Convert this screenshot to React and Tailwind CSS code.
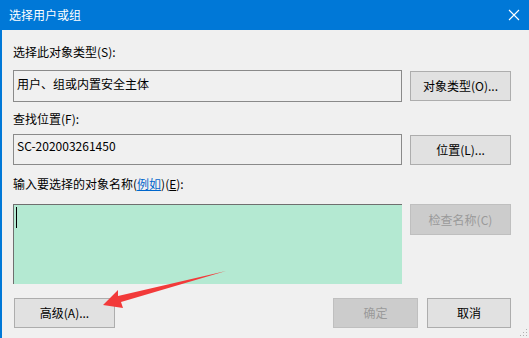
import React from "react";

const font = { fontFamily: '"Noto Sans CJK SC", "Noto Sans", sans-serif' };

function Btn({ children, className = "", disabled = false }) {
  return (
    <div
      className={
        "flex items-center justify-center text-[12px] leading-[16px] border " +
        (disabled
          ? "bg-[#cccccc] border-[#bfbfbf] text-[#9a9a9a] "
          : "bg-[#e1e1e1] border-[#adadad] text-[#000000] ") +
        className
      }
    >
      {children}
    </div>
  );
}

export default function App() {
  return (
    <div className="relative w-[529px] h-[338px] overflow-hidden bg-[#f0f0f0]" style={font}>
      {/* Title bar */}
      <div className="h-[30px] bg-[#0078d7] flex items-center justify-between pl-[9px] pr-[8px]">
        <span className="text-white text-[12px] leading-[16px]">选择用户或组</span>
        <svg width="12" height="12" viewBox="0 0 12 12" className="mr-[1px]">
          <path d="M1 1 L11 11 M11 1 L1 11" stroke="#ffffff" strokeWidth="1.1" fill="none" />
        </svg>
      </div>

      {/* Body */}
      <div className="h-[308px] border-l-2 border-[#0078d7] pl-[11px] pr-[18px] flex flex-col">
        <div className="mt-[14px] text-[12px] leading-[16px] text-black">选择此对象类型(S):</div>
        <div className="mt-[10px] flex items-start gap-[8px]">
          <div className="w-[389px] h-[32px] border border-[#8a8a8a] pl-[3px] pt-[5px] text-[12px] leading-[16px] text-black">
            用户、组或内置安全主体
          </div>
          <Btn className="w-[101px] h-[30px] mt-[1px]">对象类型(O)...</Btn>
        </div>

        <div className="mt-[9px] text-[12px] leading-[16px] text-black">查找位置(F):</div>
        <div className="mt-[7px] flex items-start gap-[8px]">
          <div className="w-[389px] h-[31px] border border-[#8a8a8a] pl-[3px] pt-[3px] text-[12px] leading-[16px] text-black">
            SC-202003261450
          </div>
          <Btn className="w-[101px] h-[30px] mt-[1px]">位置(L)...</Btn>
        </div>

        <div className="mt-[11px] text-[12px] leading-[16px] text-black">
          输入要选择的对象名称(<span className="text-[#0066cc] underline">例如</span>)(<span className="underline">E</span>):
        </div>
        <div className="mt-[12px] flex items-start gap-[8px]">
          <div className="w-[389px] h-[80px] bg-[#b4e9d2] border-t border-l border-[#6f6f6f] pl-[2px] pt-[2px]">
            <div className="w-[1px] h-[21px] bg-black"></div>
          </div>
          <Btn disabled className="w-[101px] h-[31px]">检查名称(C)</Btn>
        </div>

        <div className="mt-[14px] flex items-start">
          <Btn className="w-[101px] h-[30px] ml-[1px]">高级(A)...</Btn>
          <div className="flex-1"></div>
          <Btn disabled className="w-[85px] h-[30px]">确定</Btn>
          <Btn className="w-[84px] h-[30px] ml-[9px]">取消</Btn>
        </div>
      </div>

      {/* Resize grip */}
      <svg className="absolute right-[1px] bottom-[1px]" width="9" height="9" viewBox="0 0 9 9">
        <rect x="7" y="1" width="1" height="1" fill="#b0b0b0" />
        <rect x="4" y="4" width="1" height="1" fill="#b0b0b0" />
        <rect x="7" y="4" width="1" height="1" fill="#b0b0b0" />
        <rect x="1" y="7" width="1" height="1" fill="#b0b0b0" />
        <rect x="4" y="7" width="1" height="1" fill="#b0b0b0" />
        <rect x="7" y="7" width="1" height="1" fill="#b0b0b0" />
      </svg>

      {/* Red arrow annotation */}
      <svg className="absolute left-0 top-0 pointer-events-none" width="529" height="338" viewBox="0 0 529 338">
        <polygon
          points="103,305 118,290 118,296 226,271 121,302 123,308"
          fill="#f23a3a"
        />
      </svg>
    </div>
  );
}
